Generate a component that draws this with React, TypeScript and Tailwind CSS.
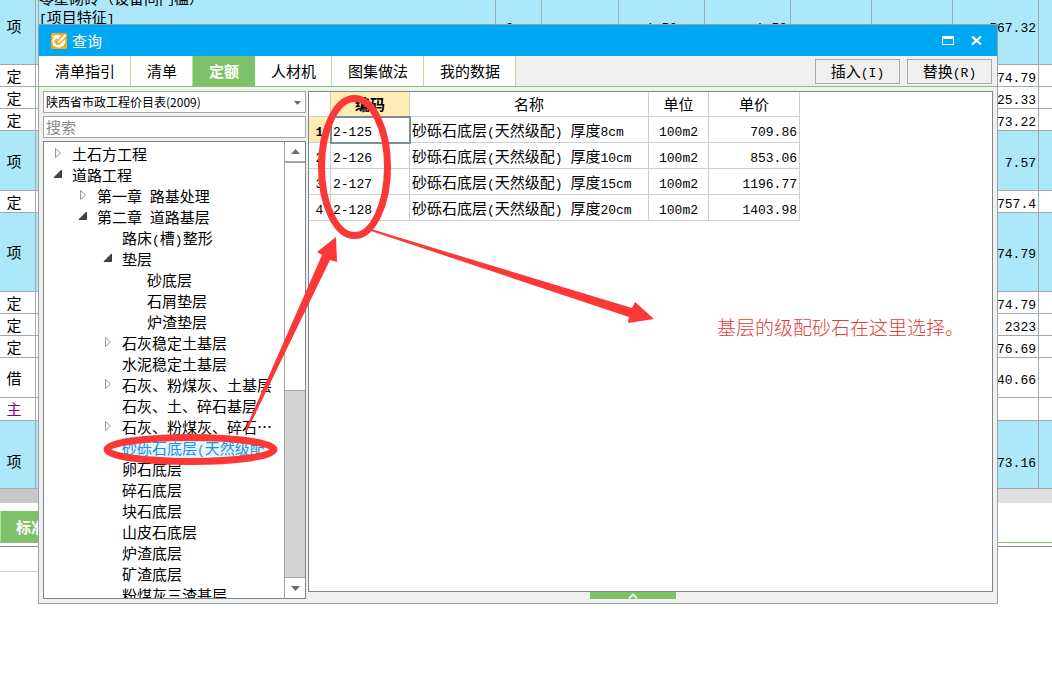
import React from 'react';

type SheetRow = {
  kind: string;
  height: string;
  blue?: boolean;
  total?: string;
};

const SHEET_ROWS: SheetRow[] = [
  { kind: '定', height: 'h-[22px]', total: '1474.79' },
  { kind: '定', height: 'h-[22px]', total: '2225.33' },
  { kind: '定', height: 'h-[22px]', total: '3573.22' },
  { kind: '项', height: 'h-[60px]', blue: true, total: '7.57' },
  { kind: '定', height: 'h-[22px]', total: '1757.4' },
  { kind: '项', height: 'h-[79px]', blue: true, total: '1474.79' },
  { kind: '定', height: 'h-[22px]', total: '1474.79' },
  { kind: '定', height: 'h-[22px]', total: '2323' },
  { kind: '定', height: 'h-[22px]', total: '1676.69' },
  { kind: '借', height: 'h-[40px]', total: '1340.66' },
  { kind: '主', height: 'h-[23px]' },
  { kind: '项', height: 'h-[68px] pt-3', blue: true, total: '1673.16' },
];

type TreeNode = {
  label: string;
  level: number;
  state?: 'open' | 'closed';
  selected?: boolean;
};

const TREE: TreeNode[] = [
  { label: '土石方工程', level: 0, state: 'closed' },
  { label: '道路工程', level: 0, state: 'open' },
  { label: '第一章 路基处理', level: 1, state: 'closed' },
  { label: '第二章 道路基层', level: 1, state: 'open' },
  { label: '路床(槽)整形', level: 2 },
  { label: '垫层', level: 2, state: 'open' },
  { label: '砂底层', level: 3 },
  { label: '石屑垫层', level: 3 },
  { label: '炉渣垫层', level: 3 },
  { label: '石灰稳定土基层', level: 2, state: 'closed' },
  { label: '水泥稳定土基层', level: 2 },
  { label: '石灰、粉煤灰、土基层', level: 2, state: 'closed' },
  { label: '石灰、土、碎石基层', level: 2 },
  { label: '石灰、粉煤灰、碎石…', level: 2, state: 'closed' },
  { label: '砂砾石底层(天然级配', level: 2, selected: true },
  { label: '卵石底层', level: 2 },
  { label: '碎石底层', level: 2 },
  { label: '块石底层', level: 2 },
  { label: '山皮石底层', level: 2 },
  { label: '炉渣底层', level: 2 },
  { label: '矿渣底层', level: 2 },
  { label: '粉煤灰三渣基层', level: 2 },
];

const INDENT = ['pl-0', 'pl-[25px]', 'pl-[50px]', 'pl-[75px]'];

const TABS = ['清单指引', '清单', '定额', '人材机', '图集做法', '我的数据'];

const QUOTAS = [
  { code: '2-125', name: '砂砾石底层(天然级配) 厚度8cm', unit: '100m2', price: '709.86' },
  { code: '2-126', name: '砂砾石底层(天然级配) 厚度10cm', unit: '100m2', price: '853.06' },
  { code: '2-127', name: '砂砾石底层(天然级配) 厚度15cm', unit: '100m2', price: '1196.77' },
  { code: '2-128', name: '砂砾石底层(天然级配) 厚度20cm', unit: '100m2', price: '1403.98' },
];

// Latin characters are set half as wide as the Chinese ones
const Mixed: React.FC<{ text: string }> = ({ text }) => (
  <>
    {text.split(/([\x20-\x7e]+)/).map((part, i) =>
      i % 2 === 1 ? (
        <span key={i} className="font-['Liberation_Mono',monospace] text-[13px] leading-none whitespace-pre">
          {part}
        </span>
      ) : (
        part
      )
    )}
  </>
);

const Expander: React.FC<{ state?: 'open' | 'closed' }> = ({ state }) => (
  <svg className="mt-1 mr-[9px] h-3 w-[10px] shrink-0" viewBox="0 0 10 12">
    {state === 'closed' && <path d="M2.5 1.5v9L7.5 6z" fill="#fff" stroke="#999" />}
    {state === 'open' && <path d="M8.5 2v7.500H1z" fill="#444" stroke="#222" strokeWidth="0.8" />}
  </svg>
);

const Sheet: React.FC = () => {
  const line = 'border-r border-b border-[#a3aaad]';
  return (
    <table className="w-full table-fixed border-separate border-spacing-0 leading-[18px]">
      <colgroup>
        <col className="w-[36px]" />
        <col className="w-[3px]" />
        <col />
        <col className="w-[46px]" />
        <col className="w-[77px]" />
        <col className="w-[86px]" />
        <col className="w-[86px]" />
        <col className="w-[81px]" />
        <col className="w-[81px]" />
        <col className="w-[86px]" />
        <col className="w-[13px]" />
      </colgroup>
      <tbody>
        <tr className="bg-[#ace8fa]">
          <td className={`${line} h-[65px] pr-[7px] pb-3 text-center`}>项</td>
          <td className={line}></td>
          <td className={line}>
            <div className="flex h-[64px] flex-col justify-end overflow-hidden pb-[38px] leading-[19px]">
              <div className="shrink-0">零星砌砖（设备间门槛）</div>
              <div className="shrink-0">
                <Mixed text="[项目特征]" />
              </div>
            </div>
          </td>
          <td className={`${line} pb-3 pl-[2px]`}><Mixed text="m3" /></td>
          <td className={line}></td>
          <td className={`${line} pb-3 text-center`}><Mixed text="1.53" /></td>
          <td className={`${line} pr-[3px] pb-3 text-right`}><Mixed text="1.53" /></td>
          <td className={line}></td>
          <td className={line}></td>
          <td className={`${line} pr-[2px] pb-3 text-right`}><Mixed text="567.32" /></td>
          <td className="border-b border-[#a3aaad]"></td>
        </tr>
        {SHEET_ROWS.map((row, i) => (
          <tr key={i} className={row.blue ? 'bg-[#ace8fa]' : 'bg-white'}>
            <td
              className={`${line} ${row.height} pr-[7px] text-center ${row.kind === '主' ? 'text-[#800080]' : ''}`}
            >
              {row.kind}
            </td>
            <td className={line}></td>
            <td className={line} colSpan={7}></td>
            <td className={`${line} ${row.height} pr-[2px] text-right`}>
              <Mixed text={row.total ?? ''} />
            </td>
            <td className="border-b border-[#a3aaad]"></td>
          </tr>
        ))}
      </tbody>
    </table>
  );
};

const TreePane: React.FC = () => (
  <div className="flex h-[458px] border border-[#7d858c] bg-white">
    <ul className="min-w-0 flex-1 overflow-hidden pt-px pl-[9px]">
      {TREE.map((node, i) => (
        <li key={i} className={`flex h-[21px] leading-[21px] whitespace-nowrap ${INDENT[node.level]}`}>
          <Expander state={node.state} />
          <a href="#" className={node.selected ? 'bg-[#e5f6fe] text-[#1e8ee6]' : 'text-black'}>
            <Mixed text={node.label} />
          </a>
        </li>
      ))}
    </ul>
    <div className="flex w-[21px] flex-col border-l border-[#a0a4a8] bg-[#d3d3d3]">
      <button type="button" aria-label="向上" className="flex h-[21px] items-center justify-center border-b-2 border-[#a0a4a8] bg-white">
        <svg width="9" height="5" viewBox="0 0 9 5"><path d="M0 5L4.500 0 9 5z" fill="#666b75" /></svg>
      </button>
      <div className="h-[228px] border-b border-[#a0a4a8] bg-white"></div>
      <div className="flex-1"></div>
      <button type="button" aria-label="向下" className="flex h-[21px] items-center justify-center border-t border-[#a0a4a8] bg-white">
        <svg width="9" height="5" viewBox="0 0 9 5"><path d="M0 0h9L4.500 5z" fill="#666b75" /></svg>
      </button>
    </div>
  </div>
);

const QuotaTable: React.FC = () => {
  const head = 'border-r border-b border-[#cfcfcf] p-0';
  const cell = 'border-r border-b border-[#cfcfcf] pt-px';
  return (
    <table className="w-[491px] table-fixed border-separate border-spacing-0">
      <colgroup>
        <col className="w-[22px]" />
        <col className="w-[79px]" />
        <col className="w-[239px]" />
        <col className="w-[60px]" />
        <col className="w-[91px]" />
      </colgroup>
      <thead>
        <tr>
          <th className={`${head} h-[25px]`}></th>
          <th className={`${head} bg-[#ffecb5] font-bold`}>编码</th>
          <th className={`${head} font-normal`}>名称</th>
          <th className={`${head} font-normal`}>单位</th>
          <th className={`${head} font-normal`}>单价</th>
        </tr>
      </thead>
      <tbody>
        {QUOTAS.map((q, i) => (
          <tr key={q.code}>
            <td className={`${cell} h-[26px] text-center ${i === 0 ? 'bg-[#ffecb5] font-bold' : ''}`}>
              <Mixed text={String(i + 1)} />
            </td>
            <td className={`${cell} pl-[2px] ${i === 0 ? 'outline-2 -outline-offset-1 outline-[#7b8f96]' : ''}`}>
              <Mixed text={q.code} />
            </td>
            <td className={`${cell} pl-[2px] whitespace-nowrap`}>
              <Mixed text={q.name} />
            </td>
            <td className={`${cell} text-center`}>
              <Mixed text={q.unit} />
            </td>
            <td className={`${cell} pr-[2px] text-right`}>
              <Mixed text={q.price} />
            </td>
          </tr>
        ))}
      </tbody>
    </table>
  );
};

const QueryDialog: React.FC = () => (
  <div role="dialog" aria-label="查询" className="absolute top-[24px] right-[54px] left-[38px] border border-[#9a9fa3] bg-[#f0f0f0]">
    <div className="flex h-[31px] items-center bg-[#00a8f3] pr-[14px] pl-3 text-white">
      <svg width="16" height="16" viewBox="0 0 16 16">
        <rect width="16" height="16" rx="1.500" fill="#f7a823" />
        <path d="M1 3.500C4 1.500 8 1.500 10 3L6.500 6.500 5.500 5.200 3.500 7.500c-.5 2 .5 4 2.500 4.500 3 .5 5-1.500 5.500-3.500l3-2C14.500 12 11 15 7 14.500 2.500 14 .5 10 1.500 6.500L3 4.800z" fill="#fff" />
        <path d="M7.500 9.500L14.500 2" stroke="#fff" strokeWidth="2.400" />
      </svg>
      <span className="ml-[5px] flex-1">查询</span>
      <button type="button" aria-label="最大化" className="mr-[17px]">
        <svg width="12" height="9" viewBox="0 0 12 9"><path d="M0 0h12v9H0zM1 3v5h10V3z" fill="#fff" fillRule="evenodd" /></svg>
      </button>
      <button type="button" aria-label="关闭" className="mr-px">
        <svg width="11" height="9" viewBox="0 0 11 9"><path d="M1 0.500L10 8.500M10 0.500L1 8.500" stroke="#fff" strokeWidth="2.200" /></svg>
      </button>
    </div>

    <div className="flex h-[31px] items-center border-b border-[#8fba7c]">
      {TABS.map((tab) => (
        <button
          key={tab}
          type="button"
          className={`h-full border-r pr-[15px] pl-4 ${
            tab === '定额' ? 'border-[#7dc268] bg-[#7dc268] font-bold text-white' : 'border-[#b9dda9] bg-white'
          }`}
        >
          {tab}
        </button>
      ))}
      <div className="flex flex-1 justify-end gap-[7px] pr-[5px]">
        <button type="button" className="h-[25px] w-[85px] border border-[#a8a8a8] leading-none">
          <Mixed text="插入(I)" />
        </button>
        <button type="button" className="h-[25px] w-[85px] border border-[#a8a8a8] leading-none">
          <Mixed text="替换(R)" />
        </button>
      </div>
    </div>

    <div className="flex gap-[2px] border-t-4 border-[#ebf5e8] pr-[4px] pb-[4px] pl-[4px]">
      <div className="flex w-[263px] shrink-0 flex-col gap-[3px]">
        <div className="relative">
          <select aria-label="定额库" className="block h-[22px] w-full appearance-none border border-[#a5a5a5] bg-white pl-[2px] text-xs">
            <option>陕西省市政工程价目表(2009)</option>
          </select>
          <svg className="pointer-events-none absolute top-[10px] right-[5px]" width="7" height="4" viewBox="0 0 7 4"><path d="M0 0h7L3.500 4z" fill="#666" /></svg>
        </div>
        <input
          type="text"
          aria-label="搜索"
          placeholder="搜索"
          className="block h-[22px] w-full border border-[#a5a5a5] bg-white pb-[2px] pl-[2px] placeholder:text-[#8a8a8a]"
        />
        <TreePane />
      </div>
      <div className="flex min-w-0 flex-1 flex-col items-center">
        <div className="w-full flex-1 border border-[#7d858c] bg-white">
          <QuotaTable />
        </div>
        <button type="button" aria-label="展开" className="mr-9 flex h-[7px] w-[86px] items-center justify-center bg-[#7dc268]">
          <svg width="10" height="6" viewBox="0 0 10 6"><path d="M1 5.500L5 1.500 9 5.500" fill="none" stroke="#e3f5dc" strokeWidth="2" /></svg>
        </button>
      </div>
    </div>
  </div>
);

const Annotations: React.FC = () => (
  <>
    <svg className="pointer-events-none absolute top-0 left-0" width="700" height="480" viewBox="0 0 700 480">
      <g fill="none" stroke="#fb3836" strokeWidth="7">
        <ellipse cx="354.500" cy="167" rx="33" ry="68.500" />
        <ellipse cx="190.500" cy="449.500" rx="83.500" ry="12" />
      </g>
      <path d="M245 430L322 255 317 252 336 237 337 262 330 260 247 431z" fill="#fb3836" />
      <path d="M371 229L632 308 635 302 654 319 628 323 629 317 371 231z" fill="#fb3836" />
    </svg>
    <p className="absolute top-[314px] left-[717px] text-[19px] leading-[26px] font-light whitespace-nowrap text-[#e23c3c]">
      基层的级配砂石在这里选择。
    </p>
  </>
);

const App: React.FC = () => {
  return (
    <main className="relative min-h-screen overflow-hidden bg-white font-['Noto_Sans_CJK_SC',sans-serif] text-[15px] leading-[20px] text-black">
      <Sheet />
      <div className="flex h-[14px]">
        <div className="w-[45px] bg-[#c8c8c8]"></div>
        <div className="flex-1 bg-[#e0e0e0]"></div>
      </div>
      <div className="mt-[8px] flex border-b border-[#8fba7c]">
        <button type="button" className="h-[31px] border-l border-[#b9dda9] bg-[#7dc268] px-[15px] font-bold text-white">标准换算</button>
      </div>
      <div className="mt-[3px] border-t border-[#8a8f92]"></div>
      <div className="mt-6 w-[60px] border-t border-[#cfcfcf]"></div>
      <QueryDialog />
      <Annotations />
    </main>
  );
};

export default App;
